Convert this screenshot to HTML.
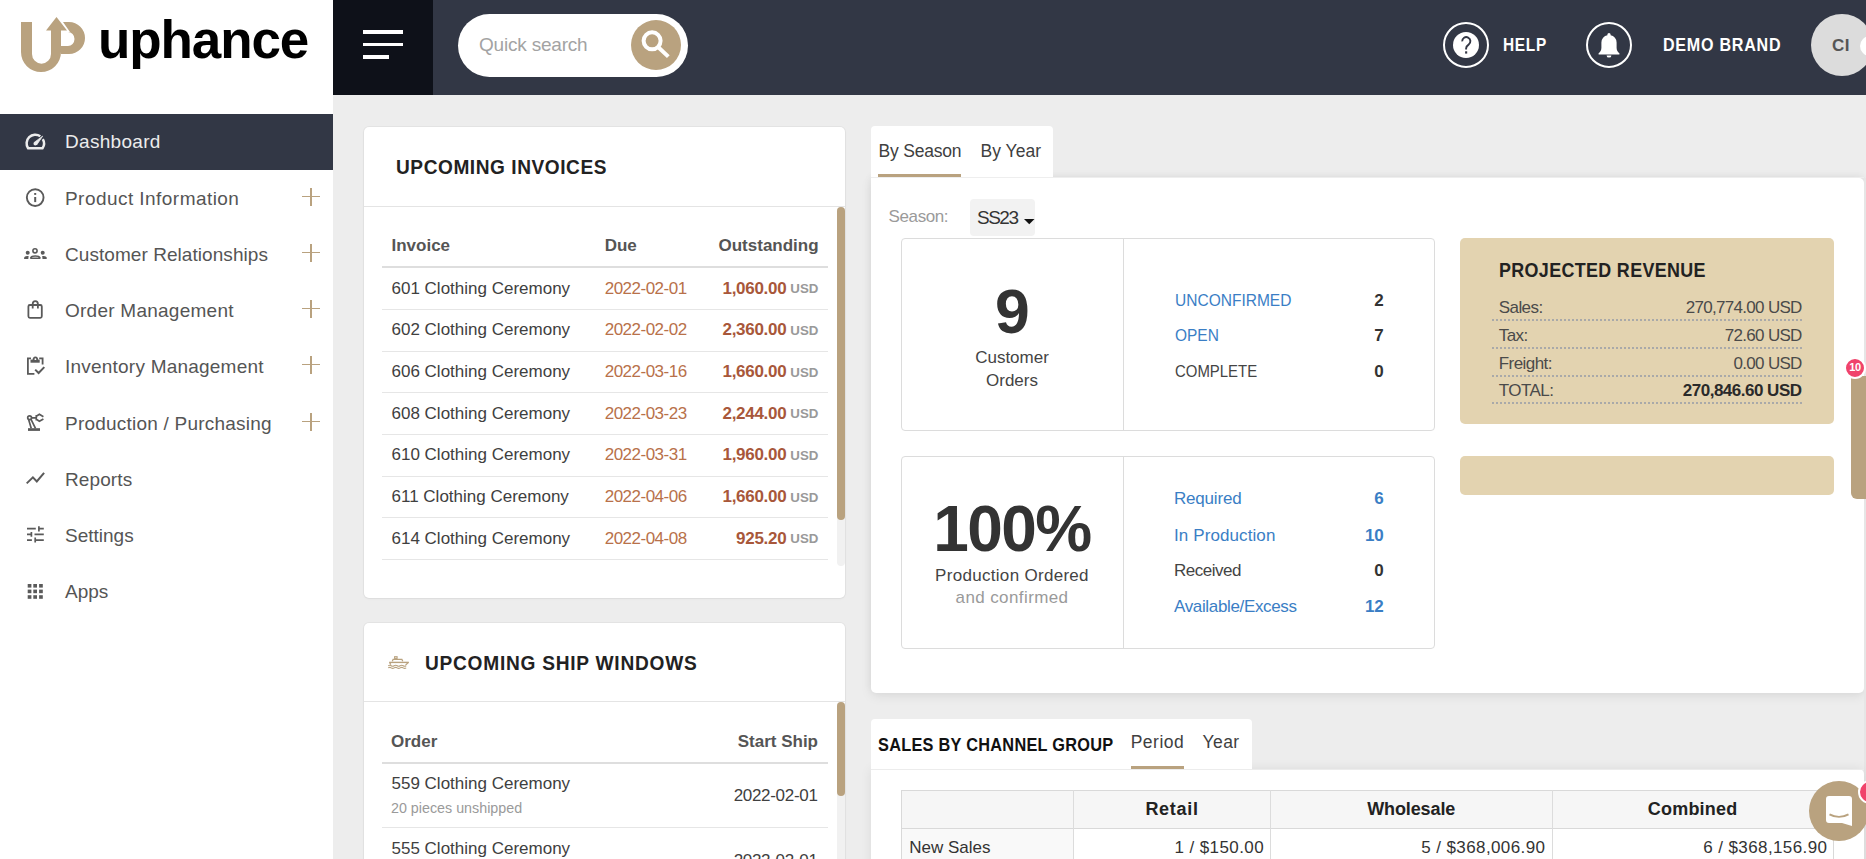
<!DOCTYPE html>
<html><head><meta charset="utf-8">
<style>
*{box-sizing:border-box;margin:0;padding:0}
html,body{width:1866px;height:859px;overflow:hidden}
body{font-family:"Liberation Sans",sans-serif;background:#ededed;position:relative}
.t{position:absolute;line-height:1;white-space:nowrap}
.r{position:absolute}
</style></head><body>
<div class="r" style="left:0px;top:0px;width:333px;height:859px;background:#fff;"></div>
<svg class="r" style="left:0;top:0" width="100" height="95" viewBox="0 0 100 95">
<path fill="#b9a27f" d="M21 22H32V54A9.5 9.7 0 0 0 51 54V30.6H46L56.5 17L67 30.6H61V52A20 20 0 0 1 21 52Z"/>
<path fill="#b9a27f" d="M63 22H69A16 16 0 0 1 69 54H61V46H68A6.5 7 0 0 0 68 32H70Z"/>
</svg>
<div class="t" style="top:12.85px;font-size:53px;color:#000;font-weight:bold;letter-spacing:-1.1px;left:98.00px;">uphance</div>
<div class="r" style="left:0px;top:114px;width:333px;height:56px;background:#323745;"></div>
<div class="t" style="top:132.15px;font-size:19px;color:#ececec;letter-spacing:0.3px;left:65.00px;">Dashboard</div>
<div class="t" style="top:189.15px;font-size:19px;color:#555;letter-spacing:0.45px;left:65.00px;">Product Information</div>
<div class="r" style="left:310.3px;top:187.6px;width:1.5px;height:18px;background:#b9a27f;"></div>
<div class="r" style="left:302px;top:195.85px;width:18.3px;height:1.5px;background:#b9a27f;"></div>
<div class="t" style="top:245.15px;font-size:19px;color:#555;letter-spacing:0.06px;left:65.00px;">Customer Relationships</div>
<div class="r" style="left:310.3px;top:243.60000000000002px;width:1.5px;height:18px;background:#b9a27f;"></div>
<div class="r" style="left:302px;top:251.85000000000002px;width:18.3px;height:1.5px;background:#b9a27f;"></div>
<div class="t" style="top:301.15px;font-size:19px;color:#555;letter-spacing:0.25px;left:65.00px;">Order Management</div>
<div class="r" style="left:310.3px;top:299.6px;width:1.5px;height:18px;background:#b9a27f;"></div>
<div class="r" style="left:302px;top:307.85px;width:18.3px;height:1.5px;background:#b9a27f;"></div>
<div class="t" style="top:357.15px;font-size:19px;color:#555;letter-spacing:0.22px;left:65.00px;">Inventory Management</div>
<div class="r" style="left:310.3px;top:355.6px;width:1.5px;height:18px;background:#b9a27f;"></div>
<div class="r" style="left:302px;top:363.85px;width:18.3px;height:1.5px;background:#b9a27f;"></div>
<div class="t" style="top:414.15px;font-size:19px;color:#555;letter-spacing:0.22px;left:65.00px;">Production / Purchasing</div>
<div class="r" style="left:310.3px;top:412.6px;width:1.5px;height:18px;background:#b9a27f;"></div>
<div class="r" style="left:302px;top:420.85px;width:18.3px;height:1.5px;background:#b9a27f;"></div>
<div class="t" style="top:470.15px;font-size:19px;color:#555;letter-spacing:0.1px;left:65.00px;">Reports</div>
<div class="t" style="top:526.15px;font-size:19px;color:#555;left:65.00px;">Settings</div>
<div class="t" style="top:582.15px;font-size:19px;color:#555;left:65.00px;">Apps</div>
<svg class="r" style="left:0;top:0" width="60" height="620" viewBox="0 0 60 620" fill="none" stroke="#5a5a5a" stroke-width="1.8">
<g stroke="#ececec"><path d="M40.3 136.3A8.7 8.7 0 0 0 28.1 148.3H42.5A8.7 8.7 0 0 0 42.8 139.05" stroke-width="2.5" stroke-linejoin="round"/>
<path d="M34.2 142.4L42.6 136.2L36.6 145Z" fill="#ececec" stroke-width="0.8" stroke-linejoin="round"/><circle cx="35.3" cy="143.7" r="1.8" fill="#ececec" stroke="none"/></g>
<circle cx="35.2" cy="197.6" r="8.35" stroke-width="1.9"/><rect x="34.2" y="193" width="2" height="1.9" fill="#5a5a5a" stroke="none"/><rect x="34.2" y="197" width="2" height="5.1" fill="#5a5a5a" stroke="none"/>
<circle cx="35" cy="250.8" r="2.1" stroke-width="1.6"/><path d="M30.8 258.2V257.6Q31.4 255.9 35.3 255.9Q39.2 255.9 39.9 257.6V258.2Z" stroke-width="1.5" stroke-linejoin="round"/>
<g fill="#5a5a5a" stroke="none"><circle cx="27.7" cy="252.7" r="2"/><circle cx="42.7" cy="252.7" r="2"/>
<path d="M24.1 259V257.6Q24.5 256 27 256H28.6L28.3 259Z"/><path d="M46.7 259V257.6Q46.3 256 43.8 256H42.2L42.5 259Z"/></g>
<rect x="28.4" y="305" width="13.4" height="12.8" rx="1.5"/><path d="M32.7 308.5V304A2.6 2.9 0 0 1 37.9 304V308.5"/>
<path d="M31 358.3H27.9V373.8H34.4M39.2 358.3H42.6V364.5"/><rect x="30.5" y="359.6" width="9.2" height="3.1" fill="#5a5a5a" stroke="none"/>
<path d="M32.6 360A2.8 3.6 0 0 1 38.2 360Z" fill="#5a5a5a" stroke="none"/><circle cx="35.4" cy="359.2" r="0.9" fill="#fff" stroke="none"/>
<path d="M35.2 369.6L38.6 373L44.3 367.1" stroke-width="2"/>
<g stroke-width="1.7"><circle cx="29.6" cy="417.8" r="1.9"/><path d="M31.5 417.8H36.3M28.7 419.7L31.2 428.3M30.9 419.2L35.5 428.3M36.3 415V420.6M36.3 416.3L39.4 414.3L43.4 416.7M36.3 419.3L39.4 421.3L43.4 418.9"/></g>
<rect x="28" y="428.2" width="12" height="2.7" fill="#5a5a5a" stroke="none"/>
<path d="M26.7 483.4L32.9 477.4L36.8 481.5L44.1 472.8" stroke-width="2"/>
<path d="M27 528.7H35.8M39.1 528.7H43.8M38.9 526.2V531.4M27 534.4H31.4M34.5 534.4H43.8M31.4 531.9V536.8M27 540.2H31.9M35.3 540.2H43.8M35.2 537.6V542.5" stroke-width="1.7"/>
<g fill="#5a5a5a" stroke="none">
<rect x="27.7" y="584" width="3.7" height="3.6"/><rect x="33.3" y="584" width="3.7" height="3.6"/><rect x="39.1" y="584" width="3.7" height="3.6"/>
<rect x="27.7" y="589.6" width="3.7" height="3.6"/><rect x="33.3" y="589.6" width="3.7" height="3.6"/><rect x="39.1" y="589.6" width="3.7" height="3.6"/>
<rect x="27.7" y="595.2" width="3.7" height="3.6"/><rect x="33.3" y="595.2" width="3.7" height="3.6"/><rect x="39.1" y="595.2" width="3.7" height="3.6"/></g>
</svg>
<div class="r" style="left:333px;top:0px;width:1533px;height:95px;background:#323745;"></div>
<div class="r" style="left:333px;top:0px;width:100px;height:95px;background:#0e1119;"></div>
<div class="r" style="left:363px;top:30px;width:40px;height:4px;background:#fff;"></div>
<div class="r" style="left:363px;top:43px;width:40px;height:3px;background:#fff;"></div>
<div class="r" style="left:363px;top:55px;width:26px;height:4px;background:#fff;"></div>
<div class="r" style="left:458px;top:14px;width:230px;height:63px;background:#fff;border-radius:32px"></div>
<div class="t" style="top:34.65px;font-size:19px;color:#a3a3a3;letter-spacing:-0.2px;left:479.00px;">Quick search</div>
<div class="r" style="left:631px;top:20px;width:50px;height:50px;background:#b9a27f;border-radius:50%"></div>
<svg class="r" style="left:631px;top:20px" width="50" height="50" viewBox="0 0 50 50" fill="none" stroke="#fff">
<circle cx="21.1" cy="20.8" r="8.5" stroke-width="4"/><path d="M26.8 26.8L37.3 36.6" stroke-width="4"/></svg>
<div class="r" style="left:1443px;top:22px;width:46px;height:46px;background:transparent;border:2px solid #fff;border-radius:50%"></div>
<div class="r" style="left:1453px;top:32px;width:26px;height:26px;background:#fff;border-radius:50%"></div>
<svg class="r" style="left:1443px;top:22px" width="46" height="46" viewBox="0 0 46 46"><path d="M19.2 19.4A4.1 4.1 0 1 1 25.6 22.6Q23.1 24.2 23.1 26.6V27.4" fill="none" stroke="#323644" stroke-width="1.9"/><rect x="22.1" y="29.3" width="2.1" height="2.3" fill="#323644"/></svg>
<div class="t" style="top:36.58px;font-size:17.5px;color:#fff;font-weight:bold;letter-spacing:0.8px;left:1502.70px;transform:scaleX(0.88);transform-origin:0 0">HELP</div>
<div class="r" style="left:1586px;top:22px;width:46px;height:46px;background:transparent;border:2px solid #fff;border-radius:50%"></div>
<svg class="r" style="left:1586px;top:22px" width="46" height="46" viewBox="0 0 46 46">
<path fill="#fff" d="M21.4 12.5a1.6 1.6 0 0 1 3.2 0v0.8a7.2 7.2 0 0 1 6 7.1v5.3c0 2.3 1.1 4.2 2.8 5.5v1.2H12.6v-1.2c1.7-1.3 2.8-3.2 2.8-5.5v-5.3a7.2 7.2 0 0 1 6-7.1z"/>
<path fill="#fff" d="M20.6 33.4h4.8a2.4 2.2 0 0 1 -4.8 0z"/></svg>
<div class="t" style="top:36.58px;font-size:17.5px;color:#fff;font-weight:bold;letter-spacing:0.8px;left:1663.00px;transform:scaleX(0.92);transform-origin:0 0">DEMO BRAND</div>
<div class="r" style="left:1811px;top:14px;width:62px;height:62px;background:#dcdcdc;border-radius:50%"></div>
<div class="t" style="top:37.45px;font-size:17px;color:#555;font-weight:bold;letter-spacing:0.5px;left:1832.00px;">CI</div>
<div class="r" style="left:1860px;top:35.5px;width:20px;height:20px;background:#fff;border-radius:50%"></div>
<div class="r" style="left:364px;top:127px;width:481px;height:471px;background:#fff;border-radius:5px;box-shadow:0 0 0 1px rgba(0,0,0,.035),0 1px 3px rgba(0,0,0,.04)"></div>
<div class="r" style="left:364px;top:206px;width:481px;height:1px;background:#e4e4e4;"></div>
<div class="t" style="top:156.73px;font-size:20.5px;color:#222;font-weight:bold;letter-spacing:0.6px;left:395.50px;transform:scaleX(0.931);transform-origin:0 0">UPCOMING INVOICES</div>
<div class="t" style="top:237.05px;font-size:17px;color:#555;font-weight:bold;left:391.50px;">Invoice</div>
<div class="t" style="top:237.05px;font-size:17px;color:#555;font-weight:bold;left:604.70px;">Due</div>
<div class="t" style="top:237.05px;font-size:17px;color:#555;font-weight:bold;right:1047.40px;">Outstanding</div>
<div class="r" style="left:382px;top:266px;width:446px;height:2px;background:#dedede;"></div>
<div class="t" style="top:279.65px;font-size:17px;color:#404040;left:391.50px;">601 Clothing Ceremony</div>
<div class="t" style="top:279.65px;font-size:17px;color:#b8714a;letter-spacing:-0.5px;left:604.70px;">2022-02-01</div>
<div class="t" style="top:279.65px;font-size:17px;color:#a8573a;font-weight:bold;letter-spacing:-0.3px;right:1080.00px;margin-right:-0.3px;">1,060.00</div>
<div class="t" style="top:282.20px;font-size:13.3px;color:#999;font-weight:bold;right:1047.60px;">USD</div>
<div class="r" style="left:382px;top:309px;width:446px;height:1px;background:#e6e6e6;"></div>
<div class="t" style="top:321.32px;font-size:17px;color:#404040;left:391.50px;">602 Clothing Ceremony</div>
<div class="t" style="top:321.32px;font-size:17px;color:#b8714a;letter-spacing:-0.5px;left:604.70px;">2022-02-02</div>
<div class="t" style="top:321.32px;font-size:17px;color:#a8573a;font-weight:bold;letter-spacing:-0.3px;right:1080.00px;margin-right:-0.3px;">2,360.00</div>
<div class="t" style="top:323.88px;font-size:13.3px;color:#999;font-weight:bold;right:1047.60px;">USD</div>
<div class="r" style="left:382px;top:351px;width:446px;height:1px;background:#e6e6e6;"></div>
<div class="t" style="top:362.99px;font-size:17px;color:#404040;left:391.50px;">606 Clothing Ceremony</div>
<div class="t" style="top:362.99px;font-size:17px;color:#b8714a;letter-spacing:-0.5px;left:604.70px;">2022-03-16</div>
<div class="t" style="top:362.99px;font-size:17px;color:#a8573a;font-weight:bold;letter-spacing:-0.3px;right:1080.00px;margin-right:-0.3px;">1,660.00</div>
<div class="t" style="top:365.54px;font-size:13.3px;color:#999;font-weight:bold;right:1047.60px;">USD</div>
<div class="r" style="left:382px;top:392px;width:446px;height:1px;background:#e6e6e6;"></div>
<div class="t" style="top:404.66px;font-size:17px;color:#404040;left:391.50px;">608 Clothing Ceremony</div>
<div class="t" style="top:404.66px;font-size:17px;color:#b8714a;letter-spacing:-0.5px;left:604.70px;">2022-03-23</div>
<div class="t" style="top:404.66px;font-size:17px;color:#a8573a;font-weight:bold;letter-spacing:-0.3px;right:1080.00px;margin-right:-0.3px;">2,244.00</div>
<div class="t" style="top:407.21px;font-size:13.3px;color:#999;font-weight:bold;right:1047.60px;">USD</div>
<div class="r" style="left:382px;top:434px;width:446px;height:1px;background:#e6e6e6;"></div>
<div class="t" style="top:446.33px;font-size:17px;color:#404040;left:391.50px;">610 Clothing Ceremony</div>
<div class="t" style="top:446.33px;font-size:17px;color:#b8714a;letter-spacing:-0.5px;left:604.70px;">2022-03-31</div>
<div class="t" style="top:446.33px;font-size:17px;color:#a8573a;font-weight:bold;letter-spacing:-0.3px;right:1080.00px;margin-right:-0.3px;">1,960.00</div>
<div class="t" style="top:448.88px;font-size:13.3px;color:#999;font-weight:bold;right:1047.60px;">USD</div>
<div class="r" style="left:382px;top:476px;width:446px;height:1px;background:#e6e6e6;"></div>
<div class="t" style="top:488.00px;font-size:17px;color:#404040;left:391.50px;">611 Clothing Ceremony</div>
<div class="t" style="top:488.00px;font-size:17px;color:#b8714a;letter-spacing:-0.5px;left:604.70px;">2022-04-06</div>
<div class="t" style="top:488.00px;font-size:17px;color:#a8573a;font-weight:bold;letter-spacing:-0.3px;right:1080.00px;margin-right:-0.3px;">1,660.00</div>
<div class="t" style="top:490.56px;font-size:13.3px;color:#999;font-weight:bold;right:1047.60px;">USD</div>
<div class="r" style="left:382px;top:517px;width:446px;height:1px;background:#e6e6e6;"></div>
<div class="t" style="top:529.67px;font-size:17px;color:#404040;left:391.50px;">614 Clothing Ceremony</div>
<div class="t" style="top:529.67px;font-size:17px;color:#b8714a;letter-spacing:-0.5px;left:604.70px;">2022-04-08</div>
<div class="t" style="top:529.67px;font-size:17px;color:#a8573a;font-weight:bold;letter-spacing:-0.3px;right:1080.00px;margin-right:-0.3px;">925.20</div>
<div class="t" style="top:532.23px;font-size:13.3px;color:#999;font-weight:bold;right:1047.60px;">USD</div>
<div class="r" style="left:382px;top:559px;width:446px;height:1px;background:#e6e6e6;"></div>
<div class="r" style="left:837px;top:207px;width:8px;height:359px;background:#f1f1f1;border-radius:4px"></div>
<div class="r" style="left:837px;top:207px;width:8px;height:313px;background:#b9a27f;border-radius:4px"></div>
<div class="r" style="left:364px;top:623px;width:481px;height:300px;background:#fff;border-radius:5px;box-shadow:0 0 0 1px rgba(0,0,0,.035),0 1px 3px rgba(0,0,0,.04)"></div>
<div class="r" style="left:364px;top:701px;width:481px;height:1px;background:#e4e4e4;"></div>
<svg class="r" style="left:383px;top:648px" width="30" height="28" viewBox="0 0 30 28" fill="none" stroke="#b9a27f" stroke-width="1.2">
<rect x="11.6" y="8.7" width="2.5" height="1.7" stroke-width="1.1"/><path d="M9.3 13.3L10.1 11.4H18.9L19.8 13.3"/><path d="M6.2 14.4H25.8" stroke-width="1.4"/>
<path d="M6.6 14.4L7.8 16.6M25.5 14.4L22.6 17"/>
<path d="M5.2 17.7q1.5 -1 3 0t3 0t3 0t3 0t3 0t3 0M5.2 19.9q1.5 -1 3 0t3 0t3 0t3 0t3 0t3 0" stroke-width="1.1"/></svg>
<div class="t" style="top:652.92px;font-size:20.5px;color:#222;font-weight:bold;letter-spacing:0.8px;left:425.00px;transform:scaleX(0.933);transform-origin:0 0">UPCOMING SHIP WINDOWS</div>
<div class="t" style="top:732.95px;font-size:17px;color:#555;font-weight:bold;left:391.00px;">Order</div>
<div class="t" style="top:732.95px;font-size:17px;color:#555;font-weight:bold;right:1048.00px;">Start Ship</div>
<div class="r" style="left:382px;top:762px;width:446px;height:2px;background:#dedede;"></div>
<div class="t" style="top:775.45px;font-size:17px;color:#404040;left:391.50px;">559 Clothing Ceremony</div>
<div class="t" style="top:800.86px;font-size:14.3px;color:#9a9a9a;left:391.00px;">20 pieces unshipped</div>
<div class="t" style="top:787.45px;font-size:17px;color:#404040;letter-spacing:-0.3px;right:1048.70px;margin-right:-0.3px;">2022-02-01</div>
<div class="r" style="left:382px;top:827px;width:446px;height:1px;background:#e6e6e6;"></div>
<div class="t" style="top:840.45px;font-size:17px;color:#404040;left:391.50px;">555 Clothing Ceremony</div>
<div class="t" style="top:852.45px;font-size:17px;color:#404040;letter-spacing:-0.3px;right:1048.70px;margin-right:-0.3px;">2022-02-01</div>
<div class="r" style="left:837px;top:702px;width:8px;height:200px;background:#f1f1f1;border-radius:4px"></div>
<div class="r" style="left:837px;top:702px;width:8px;height:94px;background:#b9a27f;border-radius:4px"></div>
<div class="r" style="left:871px;top:178px;width:993px;height:515px;background:#fff;border-radius:0 5px 5px 5px;box-shadow:0 3px 12px rgba(0,0,0,.08),0 -2px 8px rgba(0,0,0,.05)"></div>
<div class="r" style="left:871px;top:126px;width:182px;height:52px;background:#fff;border-radius:4px 4px 0 0"></div>
<div class="r" style="left:871px;top:177px;width:993px;height:1px;background:#eeeeee;"></div>
<div class="t" style="top:143.18px;font-size:17.5px;color:#404040;letter-spacing:-0.2px;left:878.50px;">By Season</div>
<div class="t" style="top:143.18px;font-size:17.5px;color:#404040;letter-spacing:0.05px;left:980.50px;">By Year</div>
<div class="r" style="left:878px;top:174px;width:83px;height:3px;background:#b9a27f;"></div>
<div class="t" style="top:208.05px;font-size:17px;color:#9a9a9a;letter-spacing:-0.4px;left:888.60px;">Season:</div>
<div class="r" style="left:970px;top:199px;width:65px;height:37px;background:#f2f2f2;border-radius:4px"></div>
<div class="t" style="top:208.15px;font-size:19px;color:#333;letter-spacing:-1.5px;left:977.00px;">SS23</div>
<svg class="r" style="left:1023.5px;top:219px" width="12" height="7" viewBox="0 0 12 7"><path d="M0 0H10.5L5.25 5.3Z" fill="#111"/></svg>
<div class="r" style="left:901px;top:238px;width:534px;height:193px;background:#fff;border:1px solid #dcdcdc;border-radius:4px"></div>
<div class="r" style="left:1123px;top:238px;width:1px;height:193px;background:#dcdcdc;"></div>
<div class="r" style="left:901px;top:456px;width:534px;height:193px;background:#fff;border:1px solid #dcdcdc;border-radius:4px"></div>
<div class="r" style="left:1123px;top:456px;width:1px;height:193px;background:#dcdcdc;"></div>
<div class="t" style="top:280.43px;font-size:62.5px;color:#333;font-weight:bold;left:712.30px;width:600px;text-align:center;">9</div>
<div class="t" style="top:348.95px;font-size:17px;color:#444;left:712.00px;width:600px;text-align:center;">Customer</div>
<div class="t" style="top:371.55px;font-size:17px;color:#444;left:712.00px;width:600px;text-align:center;">Orders</div>
<div class="t" style="top:291.65px;font-size:17px;color:#3a7ec5;left:1174.60px;transform:scaleX(0.913);transform-origin:0 0">UNCONFIRMED</div>
<div class="t" style="top:326.85px;font-size:17px;color:#3a7ec5;left:1174.60px;transform:scaleX(0.91);transform-origin:0 0">OPEN</div>
<div class="t" style="top:362.55px;font-size:17px;color:#444;left:1174.60px;transform:scaleX(0.878);transform-origin:0 0">COMPLETE</div>
<div class="t" style="top:291.65px;font-size:17px;color:#333;font-weight:bold;right:482.40px;">2</div>
<div class="t" style="top:326.85px;font-size:17px;color:#333;font-weight:bold;right:482.40px;">7</div>
<div class="t" style="top:362.55px;font-size:17px;color:#333;font-weight:bold;right:482.40px;">0</div>
<div class="t" style="top:497.20px;font-size:64px;color:#333;font-weight:bold;letter-spacing:-1.6px;left:712.00px;width:600px;text-align:center;">100%</div>
<div class="t" style="top:566.95px;font-size:17px;color:#444;letter-spacing:0.3px;left:712.00px;width:600px;text-align:center;">Production Ordered</div>
<div class="t" style="top:589.05px;font-size:17px;color:#9a9a9a;letter-spacing:0.4px;left:712.00px;width:600px;text-align:center;">and confirmed</div>
<div class="t" style="top:490.45px;font-size:17px;color:#3a7ec5;letter-spacing:-0.2px;left:1174.00px;">Required</div>
<div class="t" style="top:526.75px;font-size:17px;color:#3a7ec5;letter-spacing:0.1px;left:1174.00px;">In Production</div>
<div class="t" style="top:561.65px;font-size:17px;color:#444;letter-spacing:-0.5px;left:1174.00px;">Received</div>
<div class="t" style="top:598.05px;font-size:17px;color:#3a7ec5;letter-spacing:-0.35px;left:1174.00px;">Available/Excess</div>
<div class="t" style="top:490.45px;font-size:17px;color:#3a7ec5;font-weight:bold;right:482.20px;">6</div>
<div class="t" style="top:526.75px;font-size:17px;color:#3a7ec5;font-weight:bold;right:482.20px;">10</div>
<div class="t" style="top:561.65px;font-size:17px;color:#333;font-weight:bold;right:482.20px;">0</div>
<div class="t" style="top:598.05px;font-size:17px;color:#3a7ec5;font-weight:bold;right:482.20px;">12</div>
<div class="r" style="left:1460px;top:238px;width:374px;height:186px;background:#e3d3b0;border-radius:5px"></div>
<div class="t" style="top:259.73px;font-size:20.5px;color:#222;font-weight:bold;letter-spacing:0.4px;left:1499.40px;transform:scaleX(0.873);transform-origin:0 0">PROJECTED REVENUE</div>
<div class="t" style="top:298.95px;font-size:17px;color:#4a4a4a;letter-spacing:-0.55px;left:1498.70px;">Sales:</div>
<div class="t" style="top:298.95px;font-size:17px;color:#4a4a4a;letter-spacing:-0.7px;right:65.00px;margin-right:-0.7px;">270,774.00 USD</div>
<div class="r" style="left:1492px;top:319px;width:310px;height:2px;background:transparent;border-top:2px dotted #a9a9a9"></div>
<div class="t" style="top:326.65px;font-size:17px;color:#4a4a4a;letter-spacing:-0.55px;left:1498.70px;">Tax:</div>
<div class="t" style="top:326.65px;font-size:17px;color:#4a4a4a;letter-spacing:-0.7px;right:65.00px;margin-right:-0.7px;">72.60 USD</div>
<div class="r" style="left:1492px;top:347px;width:310px;height:2px;background:transparent;border-top:2px dotted #a9a9a9"></div>
<div class="t" style="top:354.65px;font-size:17px;color:#4a4a4a;letter-spacing:-0.55px;left:1498.70px;">Freight:</div>
<div class="t" style="top:354.65px;font-size:17px;color:#4a4a4a;letter-spacing:-0.7px;right:65.00px;margin-right:-0.7px;">0.00 USD</div>
<div class="r" style="left:1492px;top:375px;width:310px;height:2px;background:transparent;border-top:2px dotted #a9a9a9"></div>
<div class="t" style="top:381.65px;font-size:17px;color:#4a4a4a;letter-spacing:-0.55px;left:1498.70px;">TOTAL:</div>
<div class="t" style="top:381.65px;font-size:17px;color:#2a2a2a;font-weight:bold;letter-spacing:-0.5px;right:65.00px;margin-right:-0.5px;">270,846.60 USD</div>
<div class="r" style="left:1492px;top:402px;width:310px;height:2px;background:transparent;border-top:2px dotted #a9a9a9"></div>
<div class="r" style="left:1460px;top:456px;width:374px;height:39px;background:#e3d3b0;border-radius:5px"></div>
<div class="r" style="left:1851px;top:376px;width:20px;height:123px;background:#b9a27f;border-radius:0 0 0 6px;z-index:2"></div>
<div class="r" style="left:1844px;top:357px;width:22px;height:22px;background:#f0436b;border-radius:50%;border:2px solid #fff;z-index:3"></div>
<div class="t" style="top:362.35px;font-size:11px;color:#fff;font-weight:bold;letter-spacing:-0.3px;left:1555.00px;width:600px;text-align:center;z-index:4">10</div>
<div class="r" style="left:1864px;top:178px;width:2px;height:681px;background:#e6e6e6;"></div>
<div class="r" style="left:871px;top:769px;width:993px;height:120px;background:#fff;border-radius:0 5px 0 0;box-shadow:0 0 12px rgba(0,0,0,.08)"></div>
<div class="r" style="left:871px;top:719px;width:381px;height:50px;background:#fff;border-radius:4px 4px 0 0"></div>
<div class="r" style="left:871px;top:769px;width:993px;height:1px;background:#ececec;"></div>
<div class="t" style="top:735.52px;font-size:18.5px;color:#111;font-weight:bold;letter-spacing:0.3px;left:878.00px;transform:scaleX(0.882);transform-origin:0 0">SALES BY CHANNEL GROUP</div>
<div class="t" style="top:734.08px;font-size:17.5px;color:#404040;letter-spacing:0.5px;left:1130.70px;">Period</div>
<div class="t" style="top:734.08px;font-size:17.5px;color:#404040;letter-spacing:0.4px;left:1202.60px;">Year</div>
<div class="r" style="left:1131px;top:766px;width:52.5px;height:3px;background:#b9a27f;"></div>
<div class="r" style="left:901px;top:790px;width:933px;height:38px;background:#f6f6f6;border:1px solid #d9d9d9;border-bottom:none"></div>
<div class="r" style="left:901px;top:828px;width:933px;height:60px;background:#fff;border:1px solid #d9d9d9"></div>
<div class="r" style="left:902px;top:829px;width:171px;height:40px;background:#f9f9f9;"></div>
<div class="r" style="left:1073px;top:790px;width:1px;height:90px;background:#dcdcdc;"></div>
<div class="r" style="left:1270px;top:790px;width:1px;height:90px;background:#dcdcdc;"></div>
<div class="r" style="left:1552px;top:790px;width:1px;height:90px;background:#dcdcdc;"></div>
<div class="t" style="top:800.10px;font-size:18px;color:#222;font-weight:bold;letter-spacing:0.7px;left:872.00px;width:600px;text-align:center;">Retail</div>
<div class="t" style="top:800.10px;font-size:18px;color:#222;font-weight:bold;letter-spacing:-0.1px;left:1111.20px;width:600px;text-align:center;">Wholesale</div>
<div class="t" style="top:800.10px;font-size:18px;color:#222;font-weight:bold;letter-spacing:0.2px;left:1392.60px;width:600px;text-align:center;">Combined</div>
<div class="t" style="top:839.05px;font-size:17px;color:#333;left:909.30px;">New Sales</div>
<div class="t" style="top:839.05px;font-size:17px;color:#333;letter-spacing:0.4px;right:601.60px;margin-right:0.4px;">1 / $150.00</div>
<div class="t" style="top:839.05px;font-size:17px;color:#333;letter-spacing:0.4px;right:320.20px;margin-right:0.4px;">5 / $368,006.90</div>
<div class="t" style="top:839.05px;font-size:17px;color:#333;letter-spacing:0.4px;right:38.20px;margin-right:0.4px;">6 / $368,156.90</div>
<div class="r" style="left:1809px;top:781px;width:60px;height:60px;background:#b9a27f;border-radius:50%"></div>
<svg class="r" style="left:1809px;top:781px" width="60" height="60" viewBox="0 0 60 60">
<path fill="#fff" d="M17 18a3 3 0 0 1 3-3H40a3 3 0 0 1 3 3V45L33 42H20a3 3 0 0 1 -3 -3Z"/>
<path fill="none" stroke="#b9a27f" stroke-width="1.9" d="M20.5 33.3q9.5 5.2 19 0"/></svg>
<div class="r" style="left:1858px;top:779.5px;width:24px;height:24px;background:#f0436b;border-radius:50%;border:2.5px solid #fff"></div>
</body></html>
